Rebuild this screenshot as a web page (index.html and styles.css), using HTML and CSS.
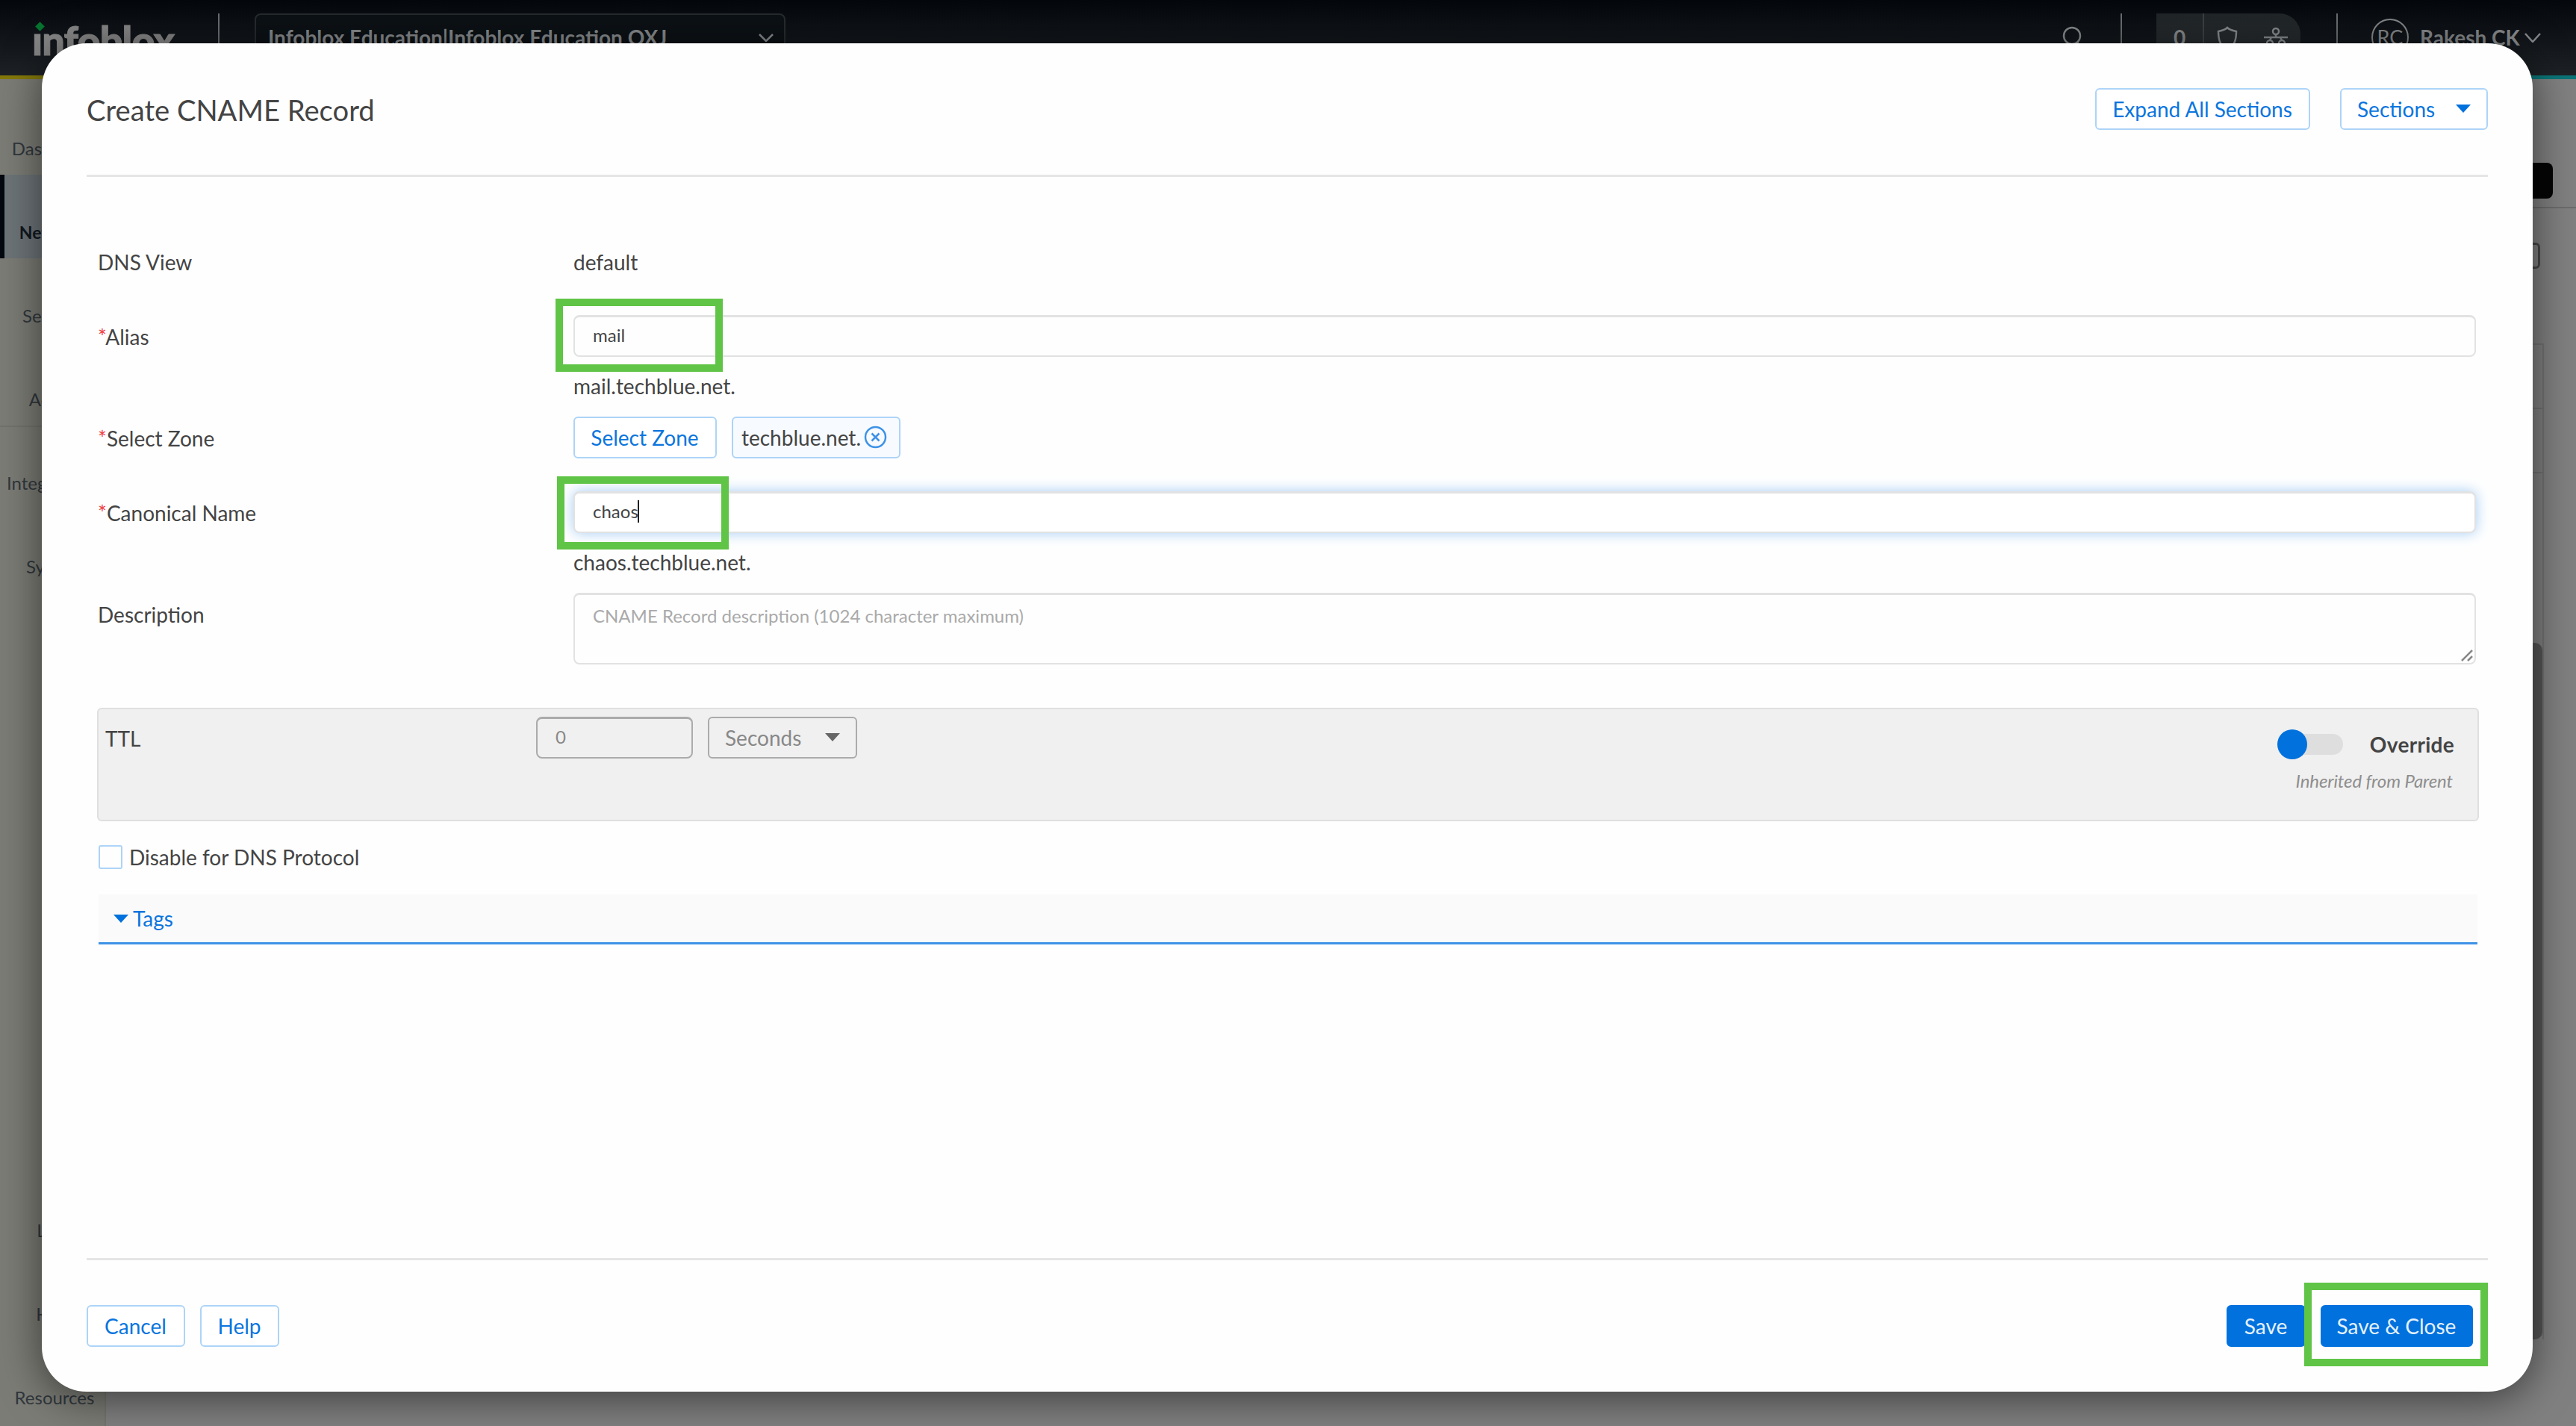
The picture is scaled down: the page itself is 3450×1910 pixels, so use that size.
FILE: index.html
```html
<!DOCTYPE html>
<html lang="en">
<head>
  <meta charset="UTF-8">
  <title>Create CNAME Record</title>
  <link rel="stylesheet" href="styles.css">
</head>
<body>
  <header class="topbar">
    <div class="logo">&#305;nfoblox<span class="logo-dot"></span></div>
    <span class="divider"></span>
    <div class="account">
      <span>Infoblox Education|Infoblox Education OXJ</span>
      <svg width="20" height="11" viewBox="0 0 20 11"><path d="M1 1l9 9 9-9"/></svg>
    </div>
    <svg class="search" width="34" height="34" viewBox="0 0 34 34"><circle cx="14" cy="13" r="11"/><path d="M21 22l9 9"/></svg>
    <span class="divider"></span>
    <div class="status">
      <span class="count">0</span>
      <svg width="30" height="34" viewBox="0 0 30 34"><path d="M15 2c3 3 7 4 12 5c0 11-2 19-12 25C5 26 3 18 3 7c5-1 9-2 12-5z"/></svg>
      <svg width="34" height="34" viewBox="0 0 34 34"><circle cx="17" cy="7" r="4"/><path d="M17 11v4M1 15h32M11 15l-2 4M23 15l2 4"/><circle cx="9" cy="23" r="4"/><circle cx="25" cy="23" r="4"/></svg>
    </div>
    <span class="divider"></span>
    <div class="user">
      <span class="avatar">RC</span>
      <span class="user-name">Rakesh CK</span>
      <svg width="22" height="13" viewBox="0 0 22 13"><path d="M1 1l10 11L21 1"/></svg>
    </div>
  </header>

  <div class="page">
    <nav class="sidebar">
      <a>Dashboard</a>
      <a class="active">Network</a>
      <a>Security</a>
      <a>Admin</a>
      <a class="group">Integrations</a>
      <a>System</a>
      <a class="push">Lists</a>
      <a>Help</a>
      <a>Resources</a>
    </nav>
    <main class="content">
      <div class="toolbar"><span class="create-btn"></span></div>
      <span class="filter-box"></span>
      <div class="table">
        <div class="table-row"></div>
        <div class="table-row"></div>
        <div class="scroll-thumb"></div>
      </div>
    </main>
  </div>

  <section class="modal">
    <div class="modal-header">
      <h1>Create CNAME Record</h1>
      <button class="btn">Expand All Sections</button>
      <button class="btn dropdown">Sections <i class="caret"></i></button>
    </div>

    <div class="modal-body">
      <div class="row view">
        <label>DNS View</label>
        <div>default</div>
      </div>

      <div class="row alias">
        <label><b>*</b>Alias</label>
        <div class="field">
          <div class="input">mail</div>
          <p class="fqdn">mail.techblue.net.</p>
          <span class="highlight"></span>
        </div>
      </div>

      <div class="row zone">
        <label><b>*</b>Select Zone</label>
        <div class="zone-picker">
          <button class="btn">Select Zone</button>
          <span class="tag">techblue.net.
            <svg width="31" height="31" viewBox="0 0 31 31"><circle cx="15.500" cy="15.500" r="13.500"/><path d="M10.500 10.500l10 10M20.500 10.500l-10 10"/></svg>
          </span>
        </div>
      </div>

      <div class="row canonical">
        <label><b>*</b>Canonical Name</label>
        <div class="field">
          <div class="input focused">chaos<span class="cursor"></span></div>
          <p class="fqdn">chaos.techblue.net.</p>
          <span class="highlight"></span>
        </div>
      </div>

      <div class="row description">
        <label>Description</label>
        <div class="input textarea">CNAME Record description (1024 character maximum)
          <svg class="resizer" width="16" height="16" viewBox="0 0 16 16"><path d="M1 15L15 1M9 15l6-6"/></svg>
        </div>
      </div>

      <div class="ttl">
        <label>TTL</label>
        <div class="input ttl-value">0</div>
        <button class="btn dropdown ttl-unit">Seconds <i class="caret"></i></button>
        <div class="override">
          <div class="override-row"><span class="toggle"></span>Override</div>
          <em>Inherited from Parent</em>
        </div>
      </div>

      <div class="check-row"><span class="checkbox"></span>Disable for DNS Protocol</div>

      <div class="tags"><i class="caret"></i>Tags</div>
    </div>

    <footer class="modal-footer">
      <button class="btn">Cancel</button>
      <button class="btn">Help</button>
      <button class="btn primary save">Save</button>
      <div class="field">
        <button class="btn primary">Save &amp; Close</button>
        <span class="highlight"></span>
      </div>
    </footer>
  </section>
</body>
</html>
```

FILE: styles.css
```css
* {
  box-sizing: border-box;
}

body {
  margin: 0;
  width: 3450px;
  height: 1910px;
  overflow: hidden;
  position: relative;
  display: flex;
  flex-direction: column;
  background: #808080;
  color: #444;
  font-family: Lato, "Liberation Sans", sans-serif;
  font-size: 28px;
  line-height: 34px;
}

svg {
  fill: none;
  stroke: currentColor;
  stroke-width: 2.5;
  flex: none;
}

/* Top bar */
.topbar {
  height: 106px;
  flex: none;
  display: flex;
  align-items: flex-start;
  padding-top: 18px;
  color: #85888a;
  background: linear-gradient(#04080d, #1e2226);
  border-bottom: 5px solid;
  border-image: linear-gradient(90deg, #85780a, #3c8a3c 50%, #0a7478) 1;
}

.logo {
  position: relative;
  width: 249px;
  margin-left: 43px;
  padding-top: 11px;
  font-size: 54px;
  line-height: 50px;
  font-weight: 900;
  letter-spacing: -0.9px;
  -webkit-text-stroke: 1px #868686;
  color: #868686;
}

.logo-dot {
  position: absolute;
  left: 6px;
  top: 13px;
  width: 9px;
  height: 9px;
  background: #06752f;
  transform: rotate(45deg);
}

.divider {
  width: 2px;
  height: 70px;
  background: #6b6e70;
}

.account {
  display: flex;
  justify-content: space-between;
  width: 711px;
  height: 64px;
  margin-left: 47px;
  padding: 13px 14px 0 16px;
  border: 2px solid #262b2e;
  border-radius: 8px;
  background: #0c1115;
  font-weight: 700;
}

.account svg {
  margin-top: 12px;
}

.search {
  margin: 17px 45px 0 auto;
}

.status {
  display: flex;
  width: 193px;
  height: 64px;
  margin: 0 48px 0 46px;
  border-radius: 0 28px 28px 0;
  background: linear-gradient(#202528, #2a2e31);
}

.count {
  width: 64px;
  padding-top: 15px;
  text-align: center;
  font-weight: 700;
  border-right: 2px solid #3b4043;
}

.status svg {
  margin: 17px 0 0 16px;
}

.status svg + svg {
  margin-left: 33px;
}

.user {
  display: flex;
  margin-left: 45px;
  width: 274px;
}

.avatar {
  width: 50px;
  height: 50px;
  margin-top: 7px;
  border: 2px solid;
  border-radius: 50%;
  text-align: center;
  line-height: 46px;
  font-size: 27px;
}

.user-name {
  margin: 15px 6px 0 15px;
  font-weight: 700;
}

.user svg {
  margin-top: 26px;
}

/* Page behind the modal */
.page {
  flex: 1;
  display: flex;
}

.sidebar {
  width: 142px;
  display: flex;
  flex-direction: column;
  padding-top: 16px;
  background: #7c7c76;
  border-right: 2px solid #757570;
  color: #30383d;
  font-size: 24px;
}

.sidebar a {
  height: 112px;
  padding: 64px 0 0 6px;
  text-align: center;
  line-height: 26px;
}

.sidebar .active {
  padding: 64px 4px 0 0;
  font-size: 23px;
  font-weight: 700;
  color: #101820;
  background: #6d7478;
  border-left: 6px solid #04080f;
}

.sidebar .group {
  padding: 62px 0 0 4px;
  border-top: 2px solid #73736e;
}

.sidebar .push {
  margin-top: auto;
}

.sidebar a:last-child {
  margin-bottom: 3px;
}

.content {
  flex: 1;
  display: flex;
  flex-direction: column;
  align-items: flex-end;
}

.toolbar {
  width: 100%;
  height: 173px;
  padding: 112px 31px 0 0;
  border-bottom: 2px solid #6c6c6c;
  display: flex;
  justify-content: flex-end;
}

.create-btn {
  width: 180px;
  height: 48px;
  border-radius: 8px;
  background: #050505;
}

.filter-box {
  width: 60px;
  height: 35px;
  margin: 46px 48px 0 0;
  border: 3px solid #484848;
  border-radius: 6px;
}

.table {
  width: 600px;
  height: 1334px;
  margin: 100px 43px 0 0;
  display: flex;
  flex-direction: column;
  border: 2px solid #727272;
  border-bottom: 0;
}

.table-row {
  height: 86px;
  border-bottom: 2px solid #727272;
}

.scroll-thumb {
  width: 22px;
  margin: 227px 0 0 auto;
  flex: 1;
  border-radius: 10px;
  background: #565656;
}

/* Modal */
.modal {
  position: absolute;
  left: 56px;
  top: 58px;
  width: 3336px;
  height: 1806px;
  padding: 0 60px;
  display: flex;
  flex-direction: column;
  background: #fefefe;
  border-radius: 60px;
  box-shadow: 0 8px 56px rgba(0, 0, 0, 0.55);
}

.modal-header {
  display: flex;
  align-items: flex-start;
  height: 179px;
  padding-top: 60px;
  border-bottom: 3px solid #e5e5e5;
}

.modal-header h1 {
  flex: 1;
  margin: 6px 0 0;
  font-size: 38.2px;
  line-height: 46px;
  font-weight: 400;
}

.modal-header .btn {
  width: 288px;
}

.modal-header .dropdown {
  width: 198px;
  margin-left: 40px;
}

.btn {
  height: 56px;
  padding: 0 1px 1px 0;
  border: 2px solid #add4f8;
  border-radius: 6px;
  background: #fff;
  color: #0a75de;
  font: inherit;
  white-space: nowrap;
}

.dropdown {
  display: flex;
  justify-content: space-between;
  align-items: center;
  padding: 0 21px 1px;
}

.caret {
  width: 0;
  border: 10px solid transparent;
  border-top: 11px solid #0071dd;
  border-bottom: 0;
}

.primary {
  background: #0071dd;
  border-color: #0071dd;
  color: #e6f1fc;
}

.modal-body {
  flex: 1;
  padding: 97px 12px 0 14px;
}

.row {
  display: grid;
  grid-template-columns: 638px 2548px;
}

.row label {
  padding: 12px 0 0 1px;
}

.row label b {
  color: #f04040;
  font-weight: 400;
}

.view {
  margin-bottom: 54px;
}

.row.view label {
  padding-top: 0;
}

.zone {
  margin: 24px 0 44px;
}

.description {
  margin-top: 24px;
}

.field {
  position: relative;
}

.input {
  height: 56px;
  padding: 0 24px;
  border: 2px solid #e2e2e2;
  border-top-width: 3px;
  border-radius: 8px;
  font-size: 24px;
  line-height: 48px;
}

.focused {
  background: #fff;
  box-shadow: 0 0 18px #a5cdf5;
}

.cursor {
  display: inline-block;
  width: 2px;
  height: 30px;
  margin-left: -1px;
  background: #222;
  vertical-align: -6px;
}

.fqdn {
  margin: 22px 0 0;
}

.highlight {
  position: absolute;
  border: 10px solid #60c446;
}

.alias .highlight {
  left: -24px;
  top: -22px;
  width: 224px;
  height: 98px;
}

.canonical .highlight {
  left: -22px;
  top: -20px;
  width: 230px;
  height: 98px;
}

.zone-picker {
  display: flex;
  gap: 20px;
}

.zone-picker .btn {
  width: 192px;
}

.tag {
  display: flex;
  align-items: center;
  gap: 5px;
  width: 226px;
  height: 56px;
  padding: 0 0 1px 11px;
  border: 2px solid #add4f8;
  border-radius: 6px;
  background: #f7faff;
}

.tag svg {
  margin-left: -1px;
  color: #3d92e6;
}

.textarea {
  position: relative;
  height: 96px;
  padding-top: 11px;
  line-height: 34px;
  color: #aaa;
}

.resizer {
  position: absolute;
  right: 2px;
  bottom: 2px;
  stroke: #888;
}

.ttl {
  display: flex;
  align-items: flex-start;
  width: 3190px;
  height: 152px;
  margin-top: 58px;
  padding: 10px 31px 0 9px;
  background: #f0f0f0;
  border: 2px solid #dfdfdf;
  border-radius: 6px;
}

.ttl label {
  width: 577px;
  padding-top: 12px;
}

.ttl-value {
  width: 210px;
  border-color: #ababab;
  color: #888;
}

.ttl-unit {
  width: 200px;
  margin-left: 20px;
  border-color: #ababab;
  background: transparent;
  color: #888;
}

.ttl-unit .caret {
  border-top-color: #666;
}

.override {
  margin-left: auto;
  padding-top: 17px;
  text-align: right;
}

.override-row {
  display: flex;
  align-items: center;
  justify-content: flex-end;
  height: 40px;
  font-weight: 700;
  letter-spacing: 0.3px;
}

.toggle {
  display: flex;
  align-items: center;
  width: 78px;
  height: 28px;
  margin: 0 36px 0 10px;
  border-radius: 14px;
  background: #dedede;
}

.toggle::before {
  content: "";
  width: 40px;
  height: 40px;
  flex: none;
  margin-left: -10px;
  border-radius: 50%;
  background: #0071dd;
}

.override em {
  display: block;
  margin: 12px 2px 0 0;
  font-size: 24px;
  letter-spacing: -0.1px;
  color: #8e8e8e;
}

.check-row {
  display: flex;
  align-items: center;
  gap: 9px;
  height: 32px;
  margin: 32px 0 34px 2px;
}

.checkbox {
  width: 32px;
  height: 32px;
  border: 2px solid #add4f8;
  border-radius: 3px;
}

.tags {
  display: flex;
  align-items: center;
  gap: 6px;
  width: 3186px;
  height: 67px;
  margin-left: 2px;
  padding-left: 20px;
  background: #fafafa;
  border-bottom: 3px solid #3d92e6;
  color: #0a75de;
}

.modal-footer {
  display: flex;
  height: 179px;
  padding: 60px 20px 0 0;
  border-top: 3px solid #e5e5e5;
}

.modal-footer > .btn {
  width: 132px;
}

.modal-footer > .btn + .btn {
  width: 106px;
  margin-left: 20px;
}

.modal-footer > .save.btn {
  margin: 0 20px 0 auto;
}

.modal-footer .field .btn {
  width: 204px;
}

.modal-footer .highlight {
  left: -22px;
  top: -30px;
  width: 246px;
  height: 112px;
}
```
